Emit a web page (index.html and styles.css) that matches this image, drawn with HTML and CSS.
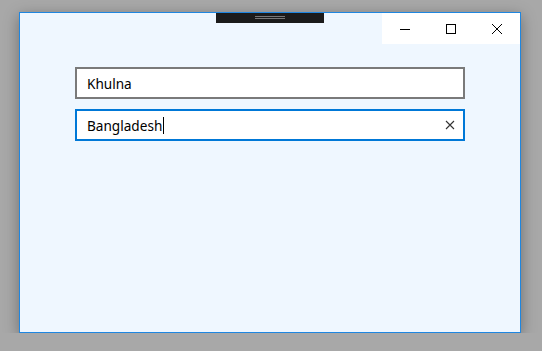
FILE: index.html
```html
<!DOCTYPE html>
<html lang="en">
<head>
    <meta charset="UTF-8">
    <meta name="viewport" content="width=device-width, initial-scale=1.0">
    <title>Textbox Demo</title>
    <link rel="stylesheet" href="styles.css">
</head>
<body>
    <div class="window">
        <!-- Title bar -->
        <div class="titlebar">
            <div class="drag-handle"><span></span><span></span></div>
            <div class="caption-buttons">
                <button class="caption-btn" aria-label="Minimize">
                    <svg width="10" height="10" viewBox="0 0 10 10"><path d="M0 5.5H10" stroke="#000" stroke-width="1"/></svg>
                </button>
                <button class="caption-btn" aria-label="Maximize">
                    <svg width="10" height="10" viewBox="0 0 10 10"><rect x="0.5" y="0.5" width="9" height="9" fill="none" stroke="#000" stroke-width="1"/></svg>
                </button>
                <button class="caption-btn" aria-label="Close">
                    <svg width="10" height="10" viewBox="0 0 10 10"><path d="M0 0L10 10M10 0L0 10" stroke="#000" stroke-width="1"/></svg>
                </button>
            </div>
        </div>

        <!-- Content -->
        <div class="content">
            <div class="textbox">
                <span class="textbox-value">Khulna</span>
            </div>
            <div class="textbox focused">
                <span class="textbox-value">Bangladesh</span><span class="caret"></span>
                <span class="clear-btn">
                    <svg width="10" height="10" viewBox="0 0 10 10"><path d="M1 1L9 9M9 1L1 9" stroke="#333" stroke-width="1.1"/></svg>
                </span>
            </div>
        </div>
    </div>
</body>
</html>
```

FILE: styles.css
```css
body {
    margin: 0;
    padding: 12px 0 0 19px;
    background-color: #a8a8a8;
    font-family: "Noto Sans", "Open Sans", sans-serif;
}
.window {
    box-sizing: border-box;
    width: 502px;
    height: 321px;
    background-color: #eff7ff;
    border: 1px solid #1e86e0;
    box-shadow: 0 4px 14px rgba(0, 0, 0, 0.35);
}
.titlebar {
    position: relative;
    display: flex;
    justify-content: flex-end;
    height: 31px;
}
.drag-handle {
    position: absolute;
    top: 0;
    left: 196px;
    width: 108px;
    height: 10px;
    background-color: #1b1b1b;
    display: flex;
    flex-direction: column;
    align-items: center;
    padding-top: 3px;
    box-sizing: border-box;
    gap: 1px;
}
.drag-handle span {
    display: block;
    width: 30px;
    height: 1px;
    background-color: #777;
}
.caption-buttons {
    display: flex;
    background-color: #fff;
}
.caption-btn {
    width: 46px;
    height: 31px;
    border: none;
    padding: 0;
    margin: 0;
    background: transparent;
    display: flex;
    align-items: center;
    justify-content: center;
}
.content {
    padding: 23px 0 0 55px;
    display: flex;
    flex-direction: column;
    gap: 10px;
}
.textbox {
    box-sizing: border-box;
    width: 390px;
    height: 32px;
    border: 2px solid #7a7a7a;
    background-color: #fff;
    display: flex;
    align-items: center;
    padding: 0 0 0 10px;
    font-size: 13.6px;
    color: #000;
}
.textbox.focused {
    border-color: #0078d7;
}
.caret {
    display: inline-block;
    width: 1px;
    height: 17px;
    background-color: #000;
    margin-left: 1px;
}
.clear-btn {
    margin-left: auto;
    width: 26px;
    height: 28px;
    display: flex;
    align-items: center;
    justify-content: center;
}
```
